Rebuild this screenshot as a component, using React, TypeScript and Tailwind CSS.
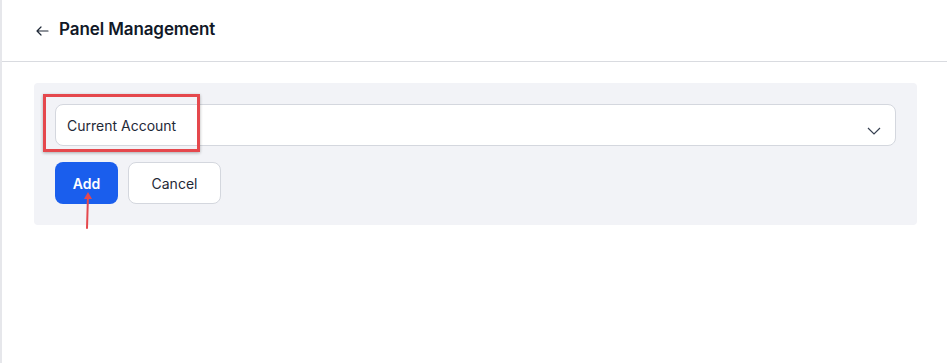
import React from 'react';

export default function App() {
  return (
    <div className="relative w-[947px] h-[363px] bg-white border-l-2 border-[#e6e7eb] font-['Inter',sans-serif] text-[#111827] overflow-hidden">
      <div className="h-[62px] border-b border-[#d9dbe0] flex items-center pl-[32px] gap-[9px]">
        <svg width="16" height="16" viewBox="0 0 16 16" fill="none" stroke="#1f2937" strokeWidth="1.2" strokeLinecap="round" strokeLinejoin="round">
          <path d="M14 8H3M7 4L3 8l4 4" />
        </svg>
        <h1 className="text-[17px] font-semibold tracking-[-0.1px] mt-[-2px]">Panel Management</h1>
      </div>

      <div className="mt-[21px] ml-[32px] w-[883px] rounded-[4px] bg-[#f2f3f7] px-[21px] pt-[21px] pb-[21px]">
        <div className="relative">
          <div className="h-[42px] bg-white border border-[#d4d7de] rounded-[8px] flex items-center justify-between pl-[11px] pr-[14px]">
            <span className="text-[14px] text-[#1f2937]">Current Account</span>
            <svg width="14" height="8" viewBox="0 0 14 8" fill="none" stroke="#374151" strokeWidth="1.2" className="mt-[12px]">
              <path d="M1 1l6 6 6-6" />
            </svg>
          </div>
          <div className="absolute left-[-12px] top-[-10px] w-[157px] h-[58px] border-[3px] border-[#e5484d] shadow-[0_1px_3px_rgba(0,0,0,0.3)]" />
        </div>
        <div className="mt-[16px] flex gap-[10px]">
          <button className="relative h-[42px] w-[63px] rounded-[8px] bg-[#1a5eed] text-white text-[14px] font-semibold">
            Add
            <svg className="absolute left-[26px] top-[28px] overflow-visible" width="12" height="40" viewBox="0 0 12 40" fill="none">
              <path d="M7 5L6 38" stroke="#e5484d" strokeWidth="2" strokeLinecap="round" />
              <path d="M3 9L7 2l4 7z" fill="#e5484d" />
            </svg>
          </button>
          <button className="h-[42px] w-[93px] rounded-[8px] bg-white border border-[#d4d7de] text-[14px] font-normal text-[#1f2937]">
            Cancel
          </button>
        </div>
      </div>
    </div>
  );
}
